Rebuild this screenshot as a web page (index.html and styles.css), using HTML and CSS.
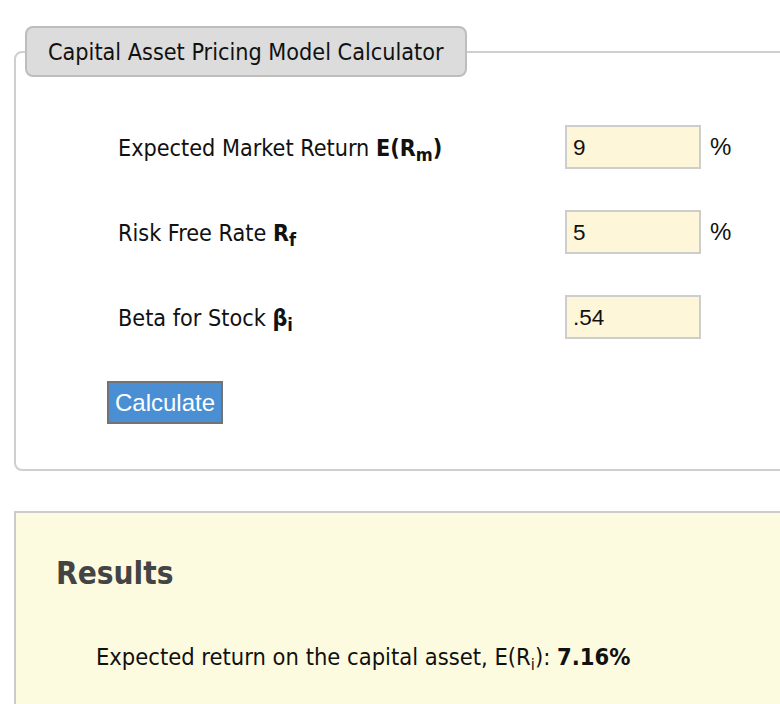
FILE: index.html
```html
<!DOCTYPE html>
<html>
<head>
<meta charset="utf-8">
<link rel="stylesheet" href="styles.css">
</head>
<body>
<div class="page">
  <fieldset class="calc">
    <legend class="calc-title">Capital Asset Pricing Model Calculator</legend>
    <div class="rows">
      <div class="row">
        <div class="label">Expected Market Return <b>E(R<sub>m</sub>)</b></div>
        <input class="field" type="text" value="9">
        <span class="unit">%</span>
      </div>
      <div class="row">
        <div class="label">Risk Free Rate <b>R<sub>f</sub></b></div>
        <input class="field" type="text" value="5">
        <span class="unit">%</span>
      </div>
      <div class="row">
        <div class="label">Beta for Stock <b>β<sub>i</sub></b></div>
        <input class="field" type="text" value=".54">
        <span class="unit"></span>
      </div>
    </div>
    <button class="btn" type="button">Calculate</button>
  </fieldset>
  <div class="results">
    <h2 class="results-title">Results</h2>
    <p class="results-line">Expected return on the capital asset, E(R<sub>i</sub>): <b>7.16%</b></p>
  </div>
</div>
</body>
</html>
```

FILE: styles.css
```css
html, body {
  margin: 0;
  padding: 0;
  overflow: hidden;
  background: #fff;
}
body {
  font-family: "DejaVu Sans Condensed", "DejaVu Sans", sans-serif;
  color: #111;
}
.page {
  width: 900px;
  height: 704px;
  overflow: hidden;
  padding: 26px 0 0 14px;
}
.calc {
  margin: 0;
  border: 2px solid #cfcfcf;
  border-radius: 8px;
  padding: 48px 0 45px 102px;
  min-width: 0;
}
.calc-title {
  margin-left: -93px;
  background: #dcdcdc;
  border: 2px solid #bdbdbd;
  border-radius: 8px;
  padding: 0 21px;
  height: 47px;
  line-height: 47px;
  font-size: 23.2px;
  color: #111;
}
.rows {
  display: flex;
  flex-direction: column;
  gap: 41px;
}
.row {
  display: flex;
  align-items: center;
  height: 44px;
}
.label {
  width: 447px;
  font-size: 23.2px;
}
.label sub {
  font-size: 0.78em;
  vertical-align: -0.3em;
  line-height: 0;
}
.field {
  box-sizing: border-box;
  width: 136px;
  height: 44px;
  margin: 0;
  border: 2px solid #cdcdcd;
  background: #fdf6d9;
  font-family: "Liberation Sans", Arial, sans-serif;
  font-size: 22.5px;
  padding: 2px 6px 0;
  color: #111;
  outline: none;
}
.unit {
  margin-left: 9px;
  font-family: "Liberation Sans", Arial, sans-serif;
  font-size: 24px;
}
.btn {
  display: block;
  margin: 42px 0 0 -11px;
  box-sizing: border-box;
  width: 116px;
  height: 43px;
  background: #4a8fd4;
  border: 2px solid #737373;
  color: #fff;
  font-family: "Liberation Sans", Arial, sans-serif;
  font-size: 24px;
  padding: 0;
}
.results {
  margin-top: 40px;
  background: #fdfbdf;
  border-top: 2px solid #cccccc;
  border-left: 2px solid #cccccc;
  height: 300px;
  padding: 42px 0 0 40px;
}
.results-title {
  margin: 0;
  font-size: 31.3px;
  font-weight: bold;
  color: #444;
}
.results-line {
  margin: 52px 0 0 40px;
  font-size: 23.5px;
}
.results-line sub {
  font-size: 0.7em;
  vertical-align: -0.3em;
  line-height: 0;
}
```
